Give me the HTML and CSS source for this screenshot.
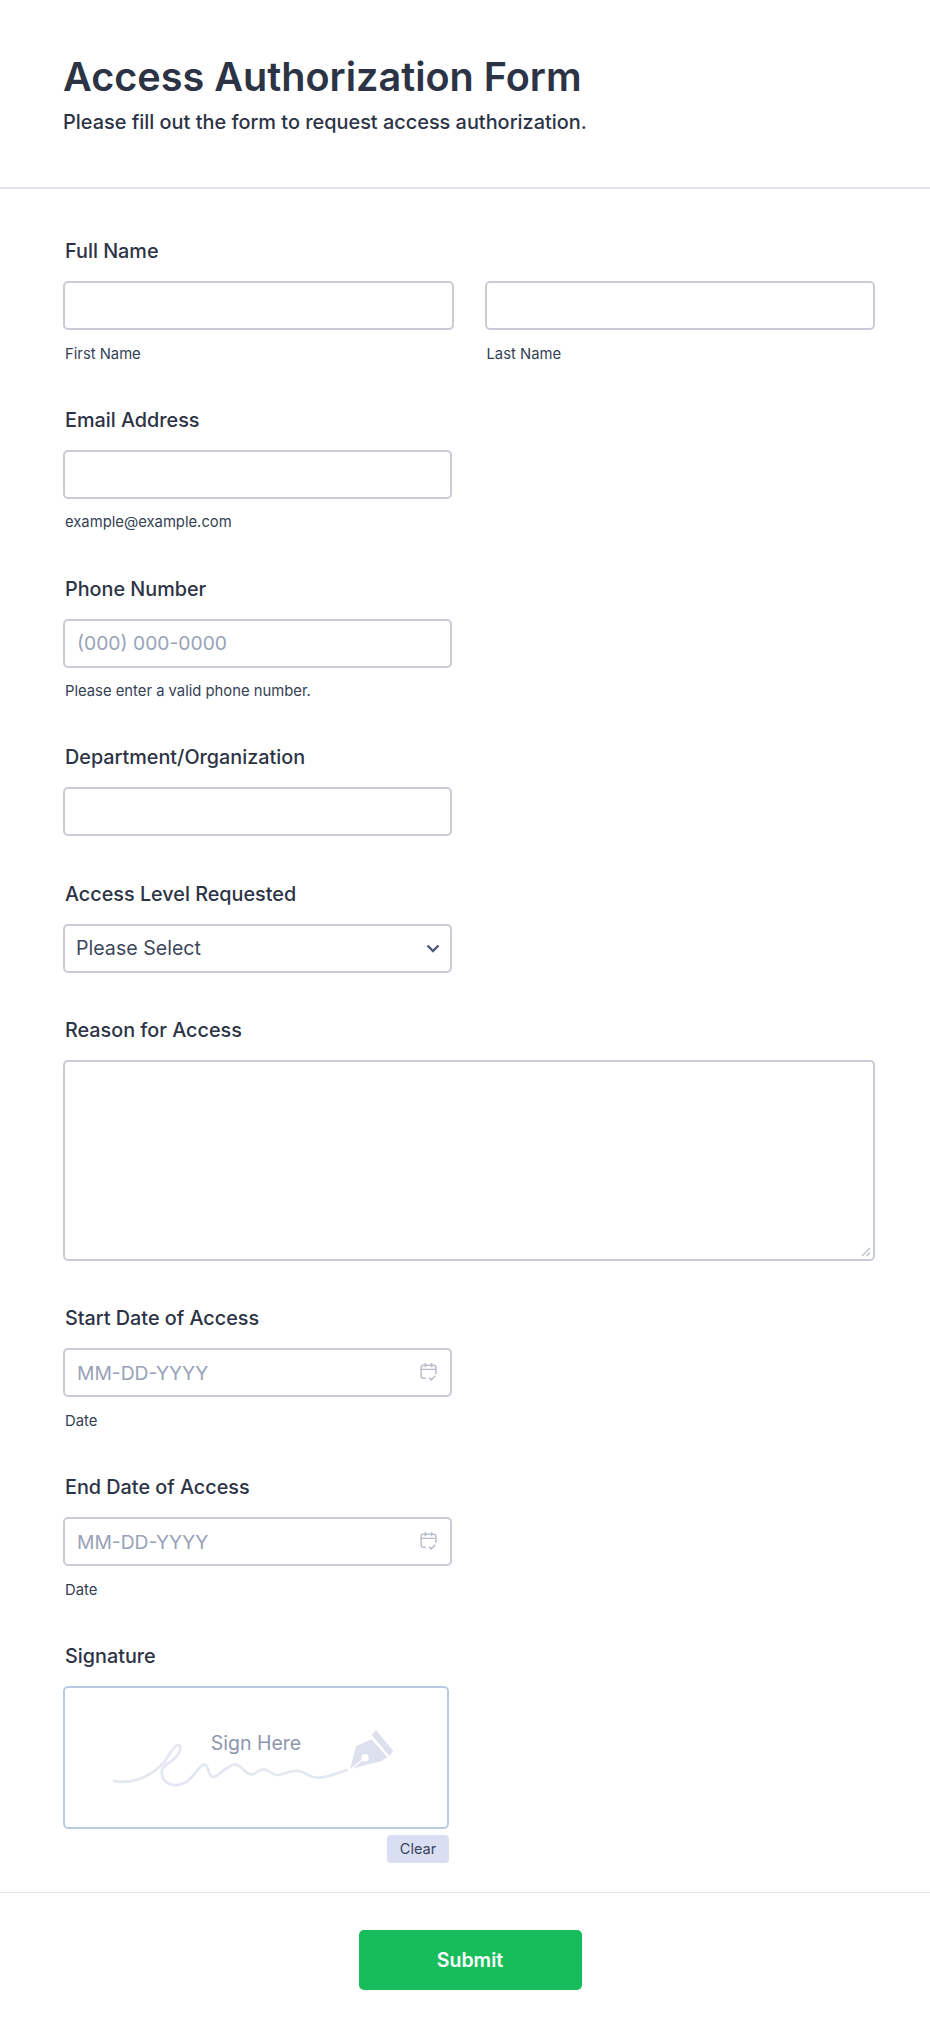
FILE: index.html
```html
<!DOCTYPE html>
<html>

<head>
    <title>Access Authorization Form</title>
    <link rel="stylesheet" href="styles.css">
</head>

<body>

    <div class="form-header">
        <h1>Access Authorization Form</h1>
        <p>Please fill out the form to request access authorization.</p>
    </div>

    <form class="form-body">
        <div class="field">
            <label class="field-label">Full Name</label>
            <div class="name-row">
                <div>
                    <input type="text" class="text-input">
                    <span class="sublabel">First Name</span>
                </div>
                <div>
                    <input type="text" class="text-input">
                    <span class="sublabel">Last Name</span>
                </div>
            </div>
        </div>

        <div class="field short">
            <label class="field-label">Email Address</label>
            <input type="email" class="text-input">
            <span class="sublabel">example@example.com</span>
        </div>

        <div class="field short">
            <label class="field-label">Phone Number</label>
            <input type="tel" class="text-input" placeholder="(000) 000-0000">
            <span class="sublabel">Please enter a valid phone number.</span>
        </div>

        <div class="field short">
            <label class="field-label">Department/Organization</label>
            <input type="text" class="text-input">
        </div>

        <div class="field short">
            <label class="field-label">Access Level Requested</label>
            <div class="input-wrap">
                <select class="text-input select-input">
                    <option>Please Select</option>
                </select>
                <svg class="chevron" viewBox="0 0 14 9" width="14" height="9">
                    <path d="M1.5 1.5 7 7l5.5-5.5" fill="none" stroke="#4b5a78" stroke-width="2.4" />
                </svg>
            </div>
        </div>

        <div class="field">
            <label class="field-label">Reason for Access</label>
            <div class="input-wrap">
                <textarea class="text-input area-input"></textarea>
                <svg class="resize-grip" viewBox="0 0 10 10" width="10" height="10">
                    <path d="M1 9 9 1M5.500 9 9 5.500" fill="none" stroke="#b8bdc9" stroke-width="1.2" />
                </svg>
            </div>
        </div>

        <div class="field short">
            <label class="field-label">Start Date of Access</label>
            <div class="input-wrap">
                <input type="text" class="text-input" placeholder="MM-DD-YYYY">
                <svg class="calendar" viewBox="0 0 16 19" width="17" height="20">
                    <path d="M5.5 15.5H3a2 2 0 0 1-2-2V5a2 2 0 0 1 2-2h10a2 2 0 0 1 2 2v6.500M1 7h14M5 1v4M11 1v4M8.500 15l2 2 4-4" fill="none" stroke="#b8bdc9" stroke-width="1.4" />
                </svg>
            </div>
            <span class="sublabel">Date</span>
        </div>

        <div class="field short">
            <label class="field-label">End Date of Access</label>
            <div class="input-wrap">
                <input type="text" class="text-input" placeholder="MM-DD-YYYY">
                <svg class="calendar" viewBox="0 0 16 19" width="17" height="20">
                    <path d="M5.5 15.5H3a2 2 0 0 1-2-2V5a2 2 0 0 1 2-2h10a2 2 0 0 1 2 2v6.500M1 7h14M5 1v4M11 1v4M8.500 15l2 2 4-4" fill="none" stroke="#b8bdc9" stroke-width="1.4" />
                </svg>
            </div>
            <span class="sublabel">Date</span>
        </div>

        <div class="signature">
            <label class="field-label">Signature</label>
            <div class="sign-pad">
                <svg class="sign-art" viewBox="45 51 1146 417">
                    <path d="M192 330C250 342 310 312 345 270C360 245 375 222 385 222C396 222 392 242 380 256C362 276 338 280 335 302C335 338 372 352 405 335C430 322 448 282 462 280C478 280 472 318 490 318C505 318 530 282 555 280C575 280 585 310 603 310C620 310 625 295 640 295C658 295 665 312 682 312C700 312 710 298 745 300C775 305 775 322 810 320C840 318 870 302 890 298" fill="none" stroke="#e3e7f1" stroke-width="8" stroke-linecap="round" />
                    <path d="M978 178 1030 240 1018 255 965 192ZM900 295 918 225 965 205 1012 258 995 270Z" fill="#dde1ee" />
                    <path d="M900 297 945 260" stroke="#fff" stroke-width="4" />
                    <circle cx="945" cy="260" r="11" fill="#fff" />
                </svg>
                <span class="sign-text">Sign Here</span>
            </div>
            <div class="sign-actions">
                <button type="button" class="clear-btn">Clear</button>
            </div>
        </div>
    </form>

    <div class="form-footer">
        <button type="submit" class="submit-btn">Submit</button>
    </div>

</body>
</html>
```

FILE: styles.css
```css
* {
    box-sizing: border-box;
}

body {
    font-family: Inter, sans-serif;
    margin: 0;
    background-color: #fff;
    color: #2c3345;
}

.form-header {
    height: 189px;
    padding: 51px 63px 0;
    border-bottom: 2px solid #e3e5ec;
}

.form-header h1 {
    margin: 0;
    font-size: 39.6px;
    line-height: 52px;
    font-weight: 600;
}

.form-header p {
    margin: 6px 0 0;
    font-size: 19.9px;
    line-height: 26px;
    font-weight: 500;
}

.form-body {
    padding: 50px 55px 0 63px;
}

.field {
    margin-bottom: 45.3px;
}

.short {
    width: 388.5px;
}

.field-label {
    display: block;
    height: 24px;
    margin: 0 0 18px 2px;
    font-size: 19.8px;
    line-height: 24px;
    font-weight: 500;
}

.name-row {
    display: grid;
    grid-template-columns: 1fr 1fr;
    gap: 31px;
}

.text-input {
    display: block;
    width: 100%;
    height: 49px;
    padding: 0 12px;
    border: 2px solid #c9ccd6;
    border-radius: 5px;
    background-color: #fff;
    color: #3c475c;
    font-family: Inter, sans-serif;
    font-size: 19.3px;
    outline: none;
}

.text-input::placeholder {
    color: #98a2b8;
}

.select-input {
    appearance: none;
    padding-left: 11px;
    font-size: 19.6px;
}

.area-input {
    height: 201px;
    resize: none;
}

.sublabel {
    display: block;
    height: 18px;
    margin: 14.5px 0 0 2px;
    color: #343f55;
    font-size: 14.8px;
    line-height: 18px;
}

.input-wrap {
    position: relative;
}

.chevron {
    position: absolute;
    top: 20px;
    right: 12px;
}

.calendar {
    position: absolute;
    top: 14px;
    right: 15px;
}

.resize-grip {
    position: absolute;
    right: 4px;
    bottom: 4px;
}

.signature {
    width: 386px;
}

.sign-pad {
    position: relative;
    height: 143px;
    border: 2px solid #b9cbe4;
    border-radius: 5px;
}

.sign-art {
    display: block;
    width: 100%;
    height: 100%;
}

.sign-text {
    position: absolute;
    top: 43px;
    left: 0;
    right: 0;
    color: #8d96ae;
    font-size: 19.5px;
    line-height: 24px;
    text-align: center;
}

.sign-actions {
    display: flex;
    justify-content: flex-end;
    margin-top: 6px;
}

.clear-btn {
    height: 28px;
    width: 62px;
    border: none;
    border-radius: 4px;
    background-color: #dadef3;
    color: #37435c;
    font-family: Inter, sans-serif;
    font-size: 14.5px;
}

.form-footer {
    display: flex;
    justify-content: center;
    margin-top: 29px;
    padding: 37px 0 49px 10px;
    border-top: 1px solid #e3e5ec;
}

.submit-btn {
    width: 223px;
    height: 60px;
    border: none;
    border-radius: 5px;
    background-color: #18bd5b;
    color: #fff;
    font-family: Inter, sans-serif;
    font-size: 19.5px;
    font-weight: 600;
}
```
